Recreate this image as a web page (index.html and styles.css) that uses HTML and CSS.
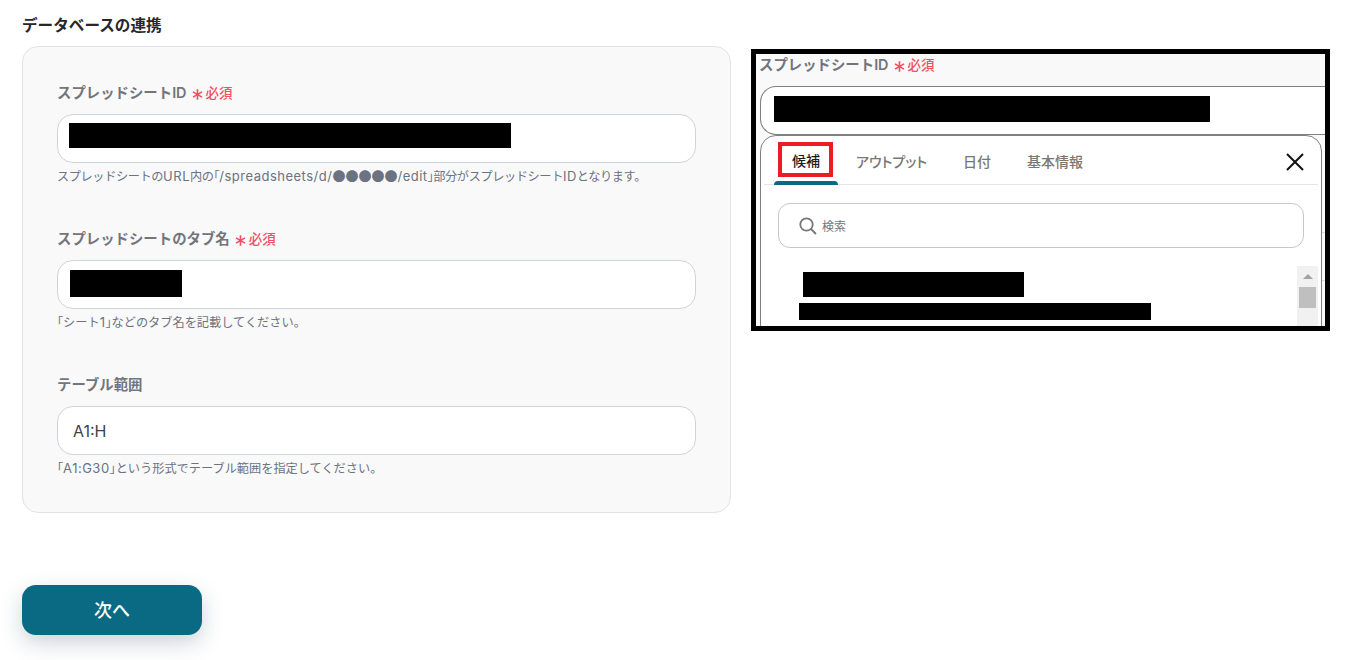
FILE: index.html
```html
<!DOCTYPE html>
<html lang="ja">
<head>
<meta charset="utf-8">
<title>データベースの連携</title>
<link rel="stylesheet" href="styles.css">
</head>
<body>
<div class="page">
  <main class="main">
    <h2 class="title">データベースの連携</h2>
    <section class="card">
      <div class="field">
        <label class="label">スプレッドシートID<span class="req"><svg class="star" viewBox="0 0 10 10"><path d="M5 .3v9.4M.9 2.6l8.2 4.8M9.1 2.6L.9 7.4"/></svg>必須</span></label>
        <div class="input"><span class="mask mask-id"></span></div>
        <p class="hint hint-tight">スプレッドシートの<span class="lat">URL</span>内の<span class="br">「</span><span class="lat">/spreadsheets/d/</span><span class="dots">●●●●●</span><span class="lat">/edit</span><span class="br">」</span>部分がスプレッドシート<span class="lat">ID</span>となります。</p>
      </div>
      <div class="field">
        <label class="label">スプレッドシートのタブ名<span class="req"><svg class="star" viewBox="0 0 10 10"><path d="M5 .3v9.4M.9 2.6l8.2 4.8M9.1 2.6L.9 7.4"/></svg>必須</span></label>
        <div class="input"><span class="mask mask-tab"></span></div>
        <p class="hint"><span class="br">「</span>シート<span class="lat">1</span><span class="br">」</span>などのタブ名を記載してください。</p>
      </div>
      <div class="field">
        <label class="label">テーブル範囲</label>
        <div class="input input-text">A1:H</div>
        <p class="hint"><span class="br">「</span><span class="lat">A1:G30</span><span class="br">」</span>という形式でテーブル範囲を指定してください。</p>
      </div>
    </section>
    <button class="next" type="button">次へ</button>
  </main>
  <aside class="shot">
    <label class="label shot-label">スプレッドシートID<span class="req"><svg class="star" viewBox="0 0 10 10"><path d="M5 .3v9.4M.9 2.6l8.2 4.8M9.1 2.6L.9 7.4"/></svg>必須</span></label>
    <div class="shot-input"><span class="mask mask-shot"></span></div>
    <span class="edge edge-a"></span>
    <span class="edge edge-b"></span>
    <div class="popover">
      <div class="tabs">
        <div class="tab tab-active"><span class="tab-mark">候補</span></div>
        <div class="tab tab-output">アウトプット</div>
        <div class="tab tab-date">日付</div>
        <div class="tab">基本情報</div>
        <svg class="close" viewBox="0 0 18 18"><path d="M1 1l16 16M17 1L1 17"/></svg>
      </div>
      <div class="search">
        <svg class="search-icon" viewBox="0 0 18 18"><circle cx="7.5" cy="7.5" r="6.2"/><path d="M12 12l5 5"/></svg>
        <span>検索</span>
      </div>
      <div class="results">
        <div class="result">
          <span class="mask mask-r1"></span>
          <span class="mask mask-r2"></span>
        </div>
        <div class="scrollbar">
          <span class="arrow"></span>
          <span class="thumb"></span>
        </div>
      </div>
    </div>
  </aside>
</div>
</body>
</html>
```
FILE: styles.css
```css
* { box-sizing: border-box; }
html, body { margin: 0; height: 660px; overflow: hidden; background: #fff; }
body { font-family: Inter, "Noto Sans CJK JP", "Noto Sans", sans-serif; color: #27272a; }
.page { display: flex; align-items: flex-start; padding-left: 22px; }
.main { width: 709px; flex: none; }
.title { margin: 0; height: 46px; padding-top: 16px; font-size: 15.6px; line-height: 20px; font-weight: 700; color: #27272a; }
.card { height: 467px; padding: 35px 34px 0; background: #f9f9fa; border: 1px solid #e2e3e8; border-radius: 16px; }
.field { height: 146px; }
.label { display: flex; align-items: center; height: 22px; font-size: 14.4px; line-height: 22px; font-weight: 600; color: #72757b; }
.req { display: inline-flex; align-items: center; margin-left: 5px; font-size: 13.5px; font-weight: 500; color: #f34e64; }
.star { width: 11px; height: 11px; margin: 2px 3px 0 0; fill: none; stroke: #f34e64; stroke-width: 1.5; }
.input { display: flex; align-items: center; height: 49px; margin-top: 10px; padding: 0 12px; background: #fff; border: 1px solid #cfd3dc; border-radius: 16px; font-size: 16px; color: #3f4248; }
.input-text { padding-left: 15px; }
.hint { margin: 5px 0 0; height: 16px; font-size: 12.2px; line-height: 16px; color: #6b7280; white-space: nowrap; }
.hint-tight { letter-spacing: -.4px; }
.br { font-feature-settings: "halt"; }
.lat { font-size: 13px; letter-spacing: .5px; }
.dots { font-family: "Noto Sans CJK JP", sans-serif; font-size: 13px; letter-spacing: 0; }
.mask { display: block; background: #000; }
.mask-id { width: 442px; height: 25px; margin: 0 0 6px -1px; }
.mask-tab { width: 112px; height: 27px; margin-bottom: 2px; }
.next { display: block; width: 180px; height: 50px; margin-top: 72px; padding-bottom: 4px; border: 0; border-radius: 14px; background: #0b6a83; color: #fff; font: 500 18px Inter, "Noto Sans CJK JP", sans-serif; box-shadow: 0 8px 22px rgba(30, 60, 80, .22); }
.shot { position: relative; flex: none; width: 579px; height: 282px; margin: 49px 0 0 20px; padding: 0 0 0 4px; background: #f9f9f9; border: 5px solid #000; overflow: hidden; }
.shot-label { height: 20px; margin: 1px 0 -1px -1px; }
.shot-input { height: 49px; margin: 12px -4px 0 0; padding: 9px 0 0 13px; background: #fff; border: 1px solid #808080; border-right: 0; border-radius: 16px 0 0 16px; }
.mask-shot { width: 436px; height: 26px; }
.edge { position: absolute; left: 566px; width: 3px; height: 1px; background: #dcdcdc; }
.edge-a { top: 178px; }
.edge-b { top: 226px; }
.popover { position: absolute; left: 4px; top: 81px; width: 562px; height: 200px; background: #fff; border: 1px solid #808080; border-radius: 16px 16px 0 0; padding: 0 3px; }
.tabs { position: relative; display: flex; align-items: center; height: 49px; border-bottom: 1px solid #e4e4e4; font-size: 14px; font-weight: 500; color: #7a7672; }
.tab { display: flex; align-items: center; justify-content: center; height: 100%; padding-top: 2px; white-space: nowrap; }
.tab-output { font-feature-settings: "palt"; }
.tab-active { position: relative; width: 64px; margin-left: 10px; margin-right: 18px; color: #1c1c1c; }
.tab-active::after { content: ""; position: absolute; left: 0; right: 0; bottom: -1px; height: 4px; background: #0b6a83; border-radius: 4px 4px 0 0; }
.tab-mark { position: relative; z-index: 1; display: flex; align-items: center; justify-content: center; width: 55px; height: 35px; margin: -4px 2px 0 0; padding: 2px 0 0 2px; border: 4.5px solid #ed1c24; }
.tab-output { margin-right: 36px; }
.tab-date { margin-right: 36px; }
.close { position: absolute; right: 14px; top: 17px; width: 18px; height: 18px; fill: none; stroke: #111; stroke-width: 2; }
.search { display: flex; align-items: center; height: 45px; margin: 18px 14px 0 14px; padding-left: 20px; border: 1px solid #c8c8c8; border-radius: 12px; font-size: 12px; color: #777; }
.search-icon { width: 18px; height: 18px; margin-right: 5px; fill: none; stroke: #777; stroke-width: 1.8; }
.results { display: flex; justify-content: space-between; height: 62px; margin-top: 18px; }
.result { padding-top: 6px; }
.mask-r1 { width: 221px; height: 25px; margin-left: 39px; }
.mask-r2 { width: 352px; height: 17px; margin: 6px 0 0 35px; }
.scrollbar { display: flex; flex-direction: column; align-items: center; width: 21px; background: #f1f1f1; }
.arrow { width: 0; height: 0; margin-top: 8px; border: 5px solid transparent; border-top: 0; border-bottom: 5px solid #a3a3a3; }
.thumb { width: 17px; height: 21px; margin-top: 8px; background: #bfbfbf; }
```
